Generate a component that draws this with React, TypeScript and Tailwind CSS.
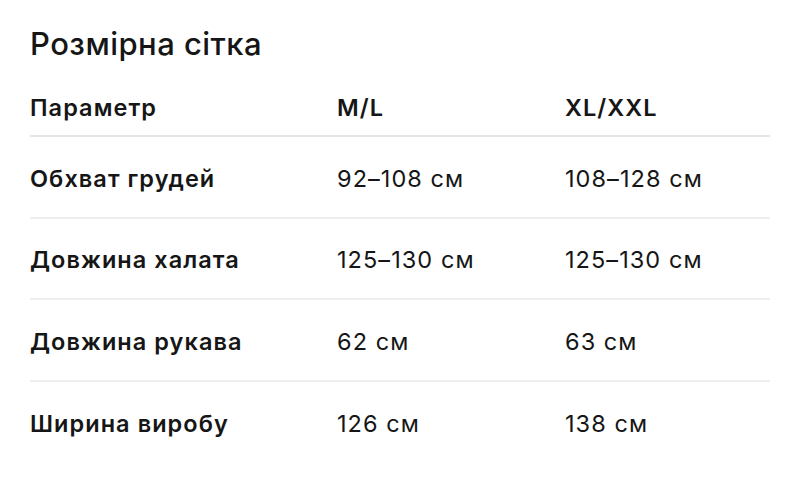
import React from "react";

const rows = [
  { label: "Обхват грудей", ml: "92–108 см", xl: "108–128 см" },
  { label: "Довжина халата", ml: "125–130 см", xl: "125–130 см" },
  { label: "Довжина рукава", ml: "62 см", xl: "63 см" },
  { label: "Ширина виробу", ml: "126 см", xl: "138 см" },
];

const App: React.FC = () => {
  return (
    <div
      className="w-[800px] h-[483px] bg-white text-[#161616] px-[30px] pt-[24px] overflow-hidden"
      style={{ fontFamily: "Inter, 'Liberation Sans', sans-serif" }}
    >
      <h1 className="text-[31px] leading-[40px] font-medium tracking-[0.015em]">Розмірна сітка</h1>

      <div className="w-[740px] text-[23.5px] tracking-[0.045em]">
        <div className="grid grid-cols-[307px_228px_1fr] items-center h-[73px] pt-[16px] border-b-2 border-[#e4e4e4] font-semibold">
          <span>Параметр</span>
          <span>M/L</span>
          <span>XL/XXL</span>
        </div>

        {rows.map((row, i) => (
          <div
            key={row.label}
            className={
              "grid grid-cols-[307px_228px_1fr] items-center h-[81.5px] pt-[3px] " +
              (i < rows.length - 1 ? "border-b-2 border-[#eeeeee]" : "")
            }
          >
            <span className="font-semibold">{row.label}</span>
            <span>{row.ml}</span>
            <span>{row.xl}</span>
          </div>
        ))}
      </div>
    </div>
  );
};

export default App;
